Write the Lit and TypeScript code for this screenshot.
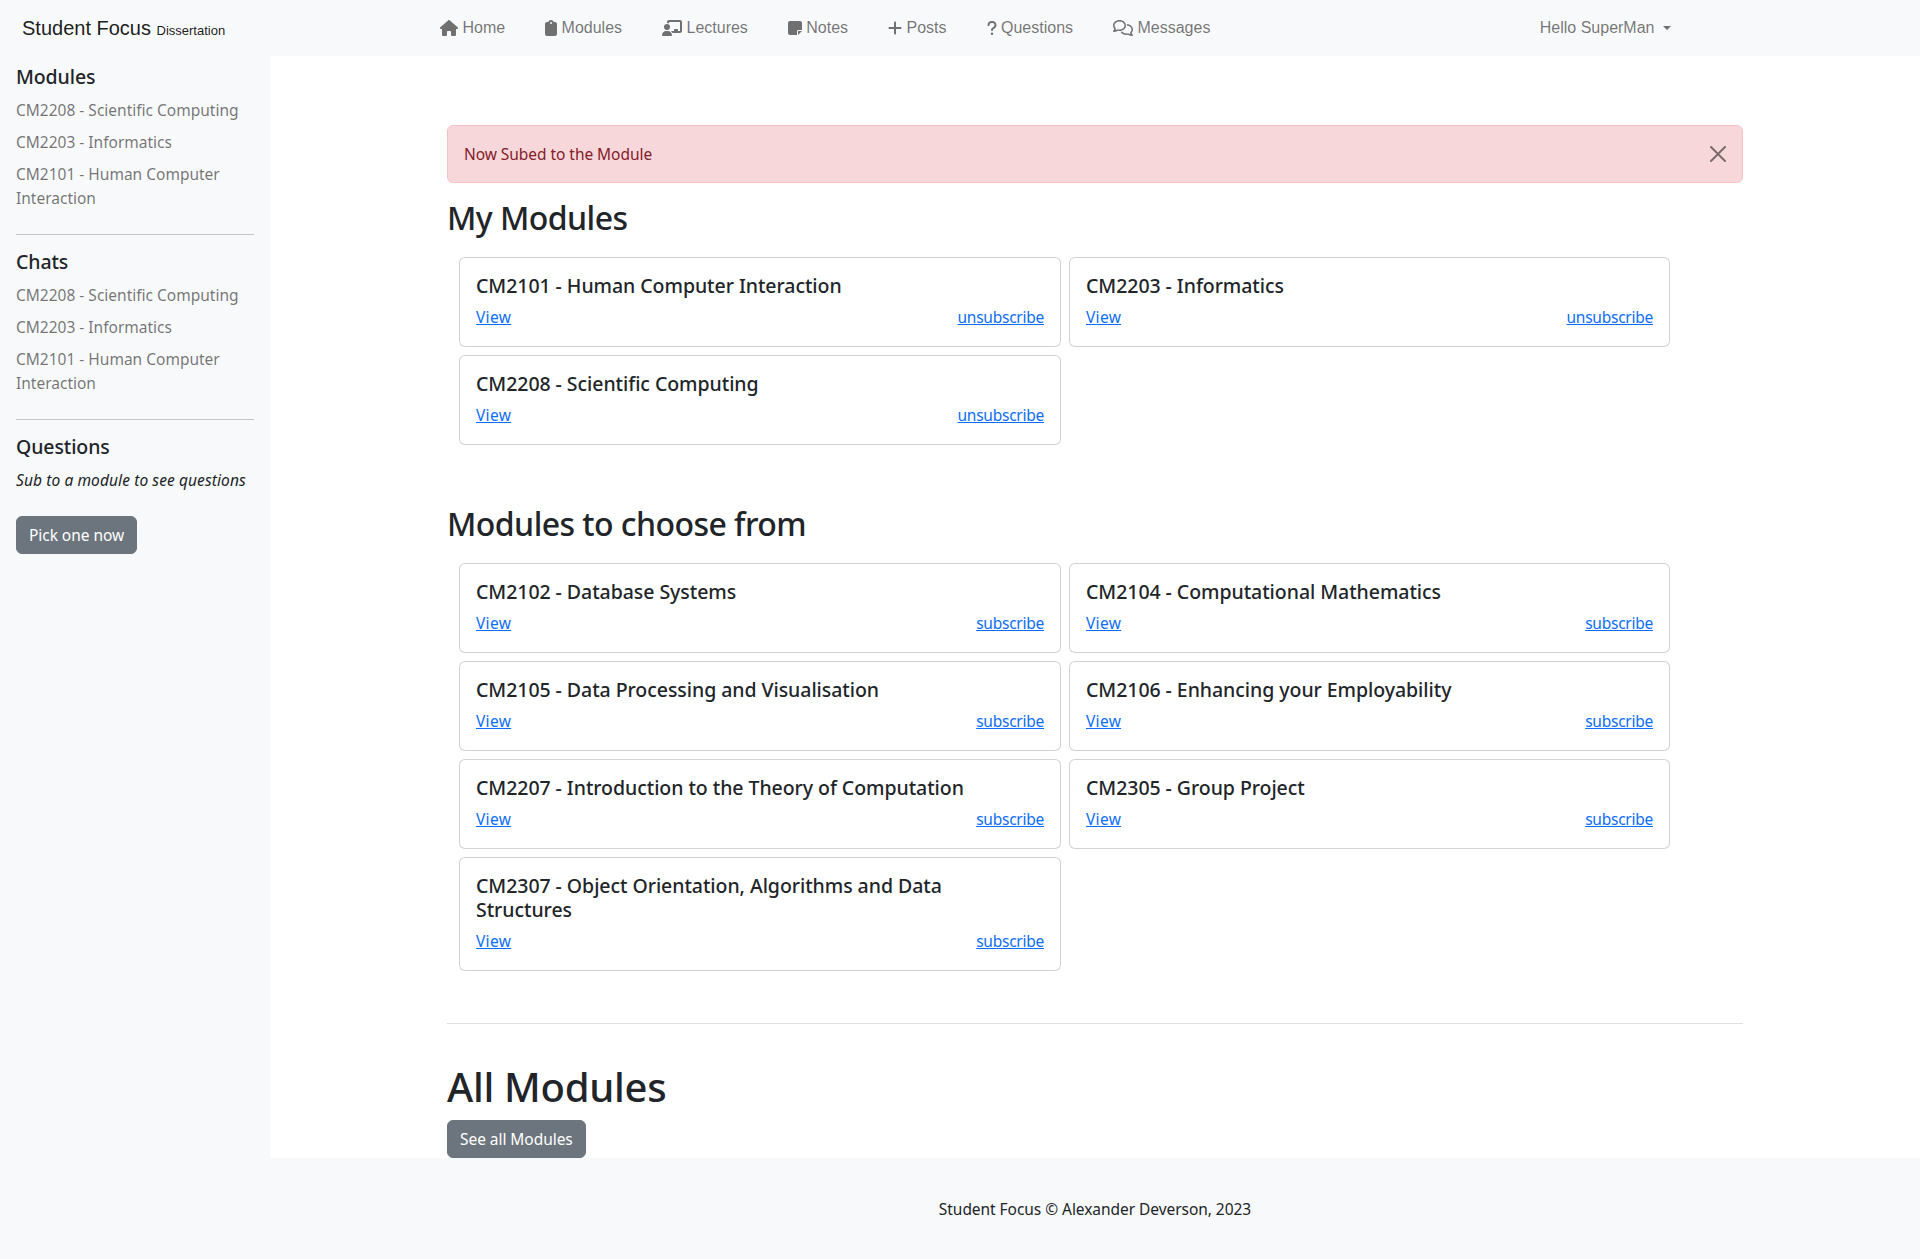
import { LitElement, html, css, svg } from "lit";
import { customElement } from "lit/decorators.js";

const icons: Record<string, [number, any]> = {
  home: [576, svg`<path d="M575.800 255.500c0 18-15 32.100-32 32.100h-32l.7 160.200c0 2.700-.2 5.400-.5 8.100V472c0 22.100-17.900 40-40 40H456c-1.100 0-2.200 0-3.300-.1c-1.400 .1-2.800 .1-4.200 .1H416 392c-22.100 0-40-17.900-40-40V448 384c0-17.700-14.300-32-32-32H256c-17.700 0-32 14.300-32 32v64 24c0 22.100-17.900 40-40 40H160 128.100c-1.500 0-3-.1-4.500-.2c-1.200 .1-2.400 .2-3.600 .2H104c-22.100 0-40-17.900-40-40V360c0-.9 0-1.900 .1-2.800V287.600H32c-18 0-32-14-32-32.100c0-9 3-17 10-24L266.400 8c7-7 15-8 22-8s15 2 21 7L564.800 231.500c8 7 12 15 11 24z"/>`],
  clip: [384, svg`<path d="M192 0c-41.800 0-77.400 26.700-90.500 64H64C28.700 64 0 92.700 0 128V448c0 35.300 28.700 64 64 64H320c35.300 0 64-28.700 64-64V128c0-35.300-28.700-64-64-64H282.500C269.400 26.700 233.800 0 192 0zm0 64a32 32 0 1 1 0 64 32 32 0 1 1 0-64z"/>`],
  lect: [640, svg`<path d="M160 64c0-35.300 28.700-64 64-64H576c35.300 0 64 28.700 64 64V352c0 35.300-28.700 64-64 64H336.800c-11.800-25.500-29.900-47.500-52.400-64H384V320c0-17.700 14.300-32 32-32h64c17.700 0 32 14.300 32 32v32h64V64L224 64v49.100C205.200 102.200 183.300 96 160 96V64zm0 64a96 96 0 1 1 0 192 96 96 0 1 1 0-192zM133.300 352h53.300C260.300 352 320 411.700 320 485.300c0 14.700-11.900 26.700-26.700 26.700H26.700C11.900 512 0 500.100 0 485.300C0 411.700 59.700 352 133.300 352z"/>`],
  note: [448, svg`<path d="M64 32C28.700 32 0 60.700 0 96V416c0 35.300 28.700 64 64 64H288V368c0-26.500 21.500-48 48-48H448V96c0-35.300-28.700-64-64-64H64zM448 352H402.700 336c-8.800 0-16 7.200-16 16v66.700V480l32-32 64-64 32-32z"/>`],
  plus: [448, svg`<path d="M256 80c0-17.700-14.300-32-32-32s-32 14.300-32 32V224H48c-17.700 0-32 14.300-32 32s14.300 32 32 32H192V432c0 17.700 14.300 32 32 32s32-14.300 32-32V288H400c17.700 0 32-14.300 32-32s-14.300-32-32-32H256V80z"/>`],
  q: [320, svg`<path d="M80 160c0-35.300 28.700-64 64-64h32c35.300 0 64 28.700 64 64v3.600c0 21.800-11.100 42.100-29.400 53.800l-42.200 27.100c-25.200 16.200-40.400 44.100-40.400 74V320c0 17.700 14.300 32 32 32s32-14.300 32-32v-1.400c0-8.200 4.200-15.800 11-20.200l42.200-27.100c36.600-23.600 58.800-64.100 58.800-107.700V160c0-70.700-57.300-128-128-128H144C73.300 32 16 89.300 16 160c0 17.700 14.300 32 32 32s32-14.300 32-32zm80 320a40 40 0 1 0 0-80 40 40 0 1 0 0 80z"/>`],
  msg: [640, svg`<path d="M88.200 309.100c9.800-18.300 6.800-40.800-7.500-55.800C59.400 230.900 48 204 48 176c0-63.500 63.800-128 160-128s160 64.500 160 128s-63.800 128-160 128c-13.100 0-25.800-1.300-37.800-3.600c-10.400-2-21.200-.6-30.700 4.200c-4.100 2.100-8.300 4.100-12.600 6c-16 7.200-32.900 13.500-49.900 18c2.800-4.600 5.400-9.100 7.900-13.600c1.100-1.900 2.200-3.900 3.200-5.900zM0 176c0 41.800 17.200 80.100 45.900 110.300c-.9 1.700-1.900 3.500-2.800 5.100c-10.300 18.400-22.300 36.500-36.600 52.100c-6.600 7-8.300 17.200-4.600 25.900C5.800 378.300 14.400 384 24 384c43 0 86.500-13.300 122.700-29.700c4.800-2.200 9.600-4.500 14.200-6.800c15.100 3 30.900 4.500 47.100 4.500c114.900 0 208-78.800 208-176S322.900 0 208 0S0 78.800 0 176zM432 480c16.200 0 31.900-1.600 47.100-4.500c4.600 2.300 9.400 4.600 14.200 6.800C529.500 498.700 573 512 616 512c9.600 0 18.200-5.700 22-14.500c3.800-8.800 2-19-4.600-25.900c-14.200-15.600-26.200-33.700-36.600-52.100c-.9-1.700-1.900-3.400-2.800-5.100C622.800 384.100 640 345.800 640 304c0-94.500-87.900-171.500-198.200-175.800c4.100 15.200 6.200 31.200 6.200 47.800l0 .6c87.200 6.700 144 67.500 144 127.400c0 28-11.400 54.900-32.700 77.200c-14.300 15-17.300 37.600-7.500 55.800c1.100 2 2.200 4 3.200 5.900c2.500 4.500 5.200 9 7.900 13.600c-17-4.500-33.900-10.700-49.900-18c-4.300-1.900-8.500-3.900-12.600-6c-9.500-4.800-20.300-6.200-30.700-4.200c-12.100 2.400-24.700 3.600-37.800 3.600c-61.700 0-110-26.500-136.800-62.300c-16 5.400-32.800 9.400-50 11.800C279.900 441.700 350.300 480 432 480z"/>`],
};

const icon = (n: string) => {
  const [w, p] = icons[n];
  return html`<svg class="ic" viewBox="0 0 ${w} 512" width=${w / 32} height="16" fill="currentColor" aria-hidden="true">${p}</svg>`;
};

const nav = [
  ["home", "Home"], ["clip", "Modules"], ["lect", "Lectures"], ["note", "Notes"],
  ["plus", "Posts"], ["q", "Questions"], ["msg", "Messages"],
];
const side = ["CM2208 - Scientific Computing", "CM2203 - Informatics", "CM2101 - Human Computer Interaction"];
const mine = ["CM2101 - Human Computer Interaction", "CM2203 - Informatics", "CM2208 - Scientific Computing"];
const choose = [
  "CM2102 - Database Systems", "CM2104 - Computational Mathematics", "CM2105 - Data Processing and Visualisation",
  "CM2106 - Enhancing your Employability", "CM2207 - Introduction to the Theory of Computation", "CM2305 - Group Project",
  "CM2307 - Object Orientation, Algorithms and Data\nStructures",
];

@customElement("app-root")
export class AppRoot extends LitElement {
  static styles = css`
    :host { display: block; font-family: "Noto Sans", Lato, sans-serif; font-size: 15.500px; letter-spacing: -.05px; line-height: 24px; color: #212529; background: #f8f9fa; }
    * { box-sizing: border-box; }
    a { color: #0d6efd; }
    .nav { height: 56px; background: #f8f9fa; display: flex; align-items: center; padding-right: 249px; font-family: "Liberation Sans", Arial, sans-serif; font-size: 16px; letter-spacing: 0; }
    .brand { width: 420px; padding: 2px 0 0 22px; font-size: 20px; color: rgba(0,0,0,.9); white-space: nowrap; }
    .brand small { font-size: 13px; }
    .links { display: flex; flex: 1; }
    .links a, .user { color: rgba(0,0,0,.55); text-decoration: none; display: flex; align-items: center; white-space: nowrap; }
    .links a { padding: 0 20px; gap: 4.450px; }
    .ic { flex: none; }
    .caret { width: 0; height: 0; border: 4.800px solid transparent; border-top-color: currentColor; border-bottom: 0; margin-left: 8.500px; }
    .layout { display: flex; align-items: stretch; }
    aside { width: 270px; flex: none; background: #f8f9fa; padding: 9px 16px 0; }
    aside h5 { margin-bottom: 9px; letter-spacing: -.1px; }
    h1, h2, h5 { font-family: "Noto Sans", Lato, sans-serif; font-weight: 500; }
    h5 { font-size: 19.500px; line-height: 24px; margin: 0; }
    aside .l { display: block; color: rgba(0,0,0,.55); padding-bottom: 8px; letter-spacing: 0; }
    aside hr { margin: 16px 0 15px; border: 0; border-top: 1px solid #c4c5c7; }
    aside em { display: block; margin-bottom: 24px; letter-spacing: .1px; }
    .btn { display: block; width: fit-content; background: #6c757d; color: #fff; border: 1px solid #6c757d; border-radius: 6px; padding: 6px 12px; }
    main { flex: 1; background: #fff; padding: 0 177px; }
    .alert { margin-top: 69px; height: 58px; background: #f8d7da; border: 1px solid #f5c2c7; color: #842029; border-radius: 6px; padding: 16px; display: flex; justify-content: space-between; align-items: center; margin-bottom: 16px; }
    .alert svg { width: 16px; height: 16px; opacity: .5; }
    h2 { font-size: 32px; line-height: 38px; margin: 0 0 20px; letter-spacing: -.55px; }
    .grid { display: grid; grid-template-columns: 602px 601px; gap: 8px; padding-left: 12px; align-items: start; }
    .card { border: 1px solid rgba(0,0,0,.176); border-radius: 6px; padding: 16px 16px 17px; background: #fff; }
    .card h5 { white-space: pre-line; margin-bottom: 7px; letter-spacing: -.05px; }
    .row { display: flex; justify-content: space-between; }
    .row a { letter-spacing: -.25px; }
    .row a:first-child { letter-spacing: .3px; }
    hr.sep { border: 0; border-top: 1px solid #dedfe0; margin: 52px 0 40px; }
    h1 { font-size: 40px; line-height: 46px; margin: 0 0 10px; letter-spacing: -.27px; }
    .mt { margin-top: 60px; }
    footer { height: 101px; display: flex; justify-content: center; padding-left: 270px; align-items: center; }
  `;
  card(t: string, a: string) {
    return html`<div class="card"><h5>${t}</h5><div class="row"><a href="#">View</a><a href="#">${a}</a></div></div>`;
  }
  block(t: string) {
    return html`<h5>${t}</h5>${side.map((s) => html`<a class="l">${s}</a>`)}`;
  }
  render() {
    return html`
      <div class="nav">
        <div class="brand">Student Focus <small>Dissertation</small></div>
        <div class="links">${nav.map(([i, t]) => html`<a href="#">${icon(i)}${t}</a>`)}</div>
        <div class="user">Hello SuperMan<span class="caret"></span></div>
      </div>
      <div class="layout">
        <aside>
          ${this.block("Modules")}<hr />
          ${this.block("Chats")}<hr />
          <h5>Questions</h5>
          <em>Sub to a module to see questions</em>
          <span class="btn">Pick one now</span>
        </aside>
        <main>
          <div class="alert"><span>Now Subed to the Module</span>
            <svg viewBox="0 0 16 16" fill="#000"><path d="M.293.293a1 1 0 0 1 1.414 0L8 6.586 14.293.293a1 1 0 1 1 1.414 1.414L9.414 8l6.293 6.293a1 1 0 0 1-1.414 1.414L8 9.414l-6.293 6.293a1 1 0 0 1-1.414-1.414L6.586 8 .293 1.707a1 1 0 0 1 0-1.414z"/></svg></div>
          <h2>My Modules</h2>
          <div class="grid">${mine.map((m) => this.card(m, "unsubscribe"))}</div>
          <h2 class="mt">Modules to choose from</h2>
          <div class="grid">${choose.map((m) => this.card(m, "subscribe"))}</div>
          <hr class="sep" />
          <h1>All Modules</h1>
          <span class="btn">See all Modules</span>
        </main>
      </div>
      <footer>Student Focus © Alexander Deverson, 2023</footer>
    `;
  }
}
